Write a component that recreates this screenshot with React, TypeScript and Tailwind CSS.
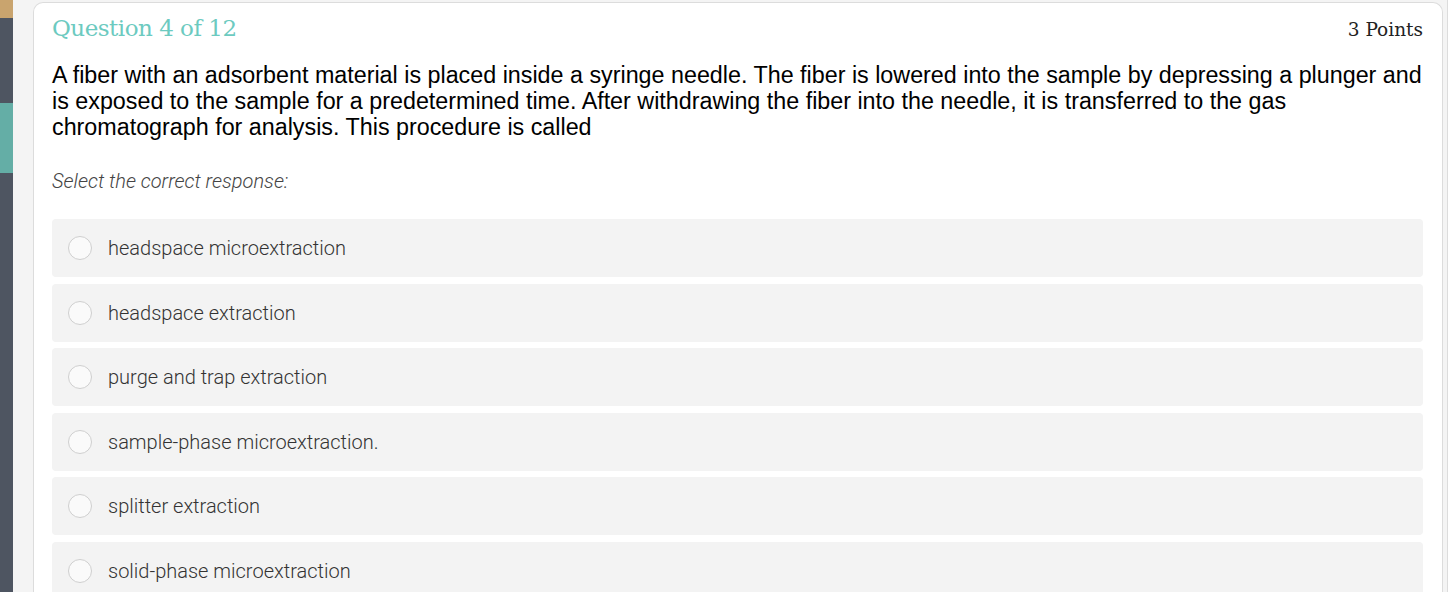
import { useState } from "react";

const options = [
  "headspace microextraction",
  "headspace extraction",
  "purge and trap extraction",
  "sample-phase microextraction.",
  "splitter extraction",
  "solid-phase microextraction",
];

export default function App() {
  const [selected, setSelected] = useState<number | null>(null);

  return (
    <div className="flex h-[592px] w-[1448px] overflow-hidden bg-[#f4f4f4]">
      {/* Side rail */}
      <div className="flex w-[13px] shrink-0 flex-col bg-[#4e5561]">
        <div className="h-[18px] bg-[#c9a46e]" />
        <div className="mt-[85px] h-[70px] bg-[#64aea6]" />
      </div>

      <div className="ml-[20px] mt-[2px] w-[1410px] shrink-0 rounded-t-[10px] border border-b-0 border-[#dcdcdc] bg-white pl-[18px] pr-[19px] pt-[8px]">
        {/* Header */}
        <div className="flex items-baseline justify-between">
          <h2 className="font-['DejaVu_Serif',serif] text-[23px] leading-[34px] tracking-[-0.5px] text-[#6ccac0]">
            Question 4 of 12
          </h2>
          <span className="font-['DejaVu_Serif',serif] text-[18.5px] text-[#222]">
            3 Points
          </span>
        </div>

        {/* Question */}
        <p className="mt-[17px] font-['Liberation_Sans',Arial,sans-serif] text-[23.3px] leading-[26px] text-black">
          A fiber with an adsorbent material is placed inside a syringe needle. The fiber is lowered into the sample by depressing a plunger and is exposed to the sample for a predetermined time. After withdrawing the fiber into the needle, it is transferred to the gas chromatograph for analysis. This procedure is called
        </p>

        <p className="mt-[28px] font-['Roboto',sans-serif] text-[20px] font-light italic leading-[26px] text-[#444]">
          Select the correct response:
        </p>

        {/* Options */}
        <div className="mt-[25px] flex flex-col gap-[6.6px]">
          {options.map((opt, i) => (
            <label
              key={opt}
              onClick={() => setSelected(i)}
              className="flex h-[58px] cursor-pointer items-center rounded-[4px] bg-[#f3f3f3] pl-[16px]"
            >
              <span className="flex h-[24px] w-[24px] items-center justify-center rounded-full border border-[#cfcfcf] bg-[#fafafa]">
                {selected === i && <span className="h-[12px] w-[12px] rounded-full bg-[#6ccac0]" />}
              </span>
              <span className="ml-[16px] font-['Roboto',sans-serif] text-[20px] font-light text-[#333]">
                {opt}
              </span>
            </label>
          ))}
        </div>
      </div>

      <div className="ml-[4px] w-px shrink-0 bg-[#dcdcdc]" />
    </div>
  );
}
